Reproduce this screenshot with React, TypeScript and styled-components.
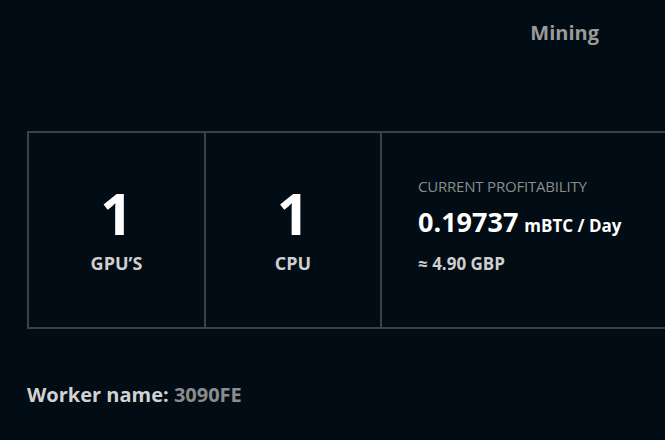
import styled, { createGlobalStyle } from "styled-components";

const GlobalStyle = createGlobalStyle`
  html, body {
    margin: 0;
    padding: 0;
    background: #020c14;
  }
  body {
    font-family: "Open Sans", "Liberation Sans", sans-serif;
    color: #ffffff;
  }
`

const Page = styled.div`
  width: 665px;
  height: 440px;
  overflow: hidden;
  background: #020c14;
  display: flex;
  flex-direction: column;
`

const Header = styled.div`
  display: flex;
  justify-content: flex-end;
  padding: 19px 66px 0 0;
  height: 131px;
  box-sizing: border-box;
`

const Tab = styled.div`
  color: #9a9a9a;
  font-weight: 700;
  font-size: 20px;
  line-height: 28px;
`

const Stats = styled.div`
  display: flex;
  margin-left: 27px;
  width: 700px;
  height: 198px;
  box-sizing: border-box;
  border: 2px solid #39414a;
  border-right: none;
`

const Cell = styled.div<{ $width?: number }>`
  width: ${p => (p.$width ? `${p.$width}px` : "auto")};
  flex: ${p => (p.$width ? "none" : "1")};
  box-sizing: border-box;
  border-right: 2px solid #39414a;
  display: flex;
  flex-direction: column;
  align-items: center;
  padding-top: 50px;

  &:last-child {
    border-right: none;
    align-items: flex-start;
    padding: 42px 0 0 36px;
  }
`

const Count = styled.div`
  font-size: 57px;
  font-weight: 700;
  line-height: 60px;
  color: #ffffff;
`

const Label = styled.div`
  margin-top: 8px;
  font-size: 18px;
  line-height: 24px;
  font-weight: 700;
  color: #cfcfcf;
`

const Caption = styled.div`
  font-size: 15px;
  line-height: 22px;
  color: #8c8c8c;
  letter-spacing: -0.2px;
`

const Amount = styled.div`
  margin-top: 9px;
  display: flex;
  align-items: baseline;
  gap: 6px;
  font-weight: 700;
  color: #ffffff;
  line-height: 32px;
`

const Value = styled.span`
  font-size: 27px;
`

const Unit = styled.span`
  font-size: 17px;
`

const Fiat = styled.div`
  margin-top: 11px;
  font-size: 17px;
  line-height: 22px;
  font-weight: 700;
  color: #cfcfcf;
`

const Worker = styled.div`
  margin: 52px 0 0 27px;
  font-size: 20px;
  font-weight: 700;
  color: #d2d2d2;
`

const WorkerId = styled.span`
  color: #8c8c8c;
`

export default function App() {
  return (
    <Page>
      <GlobalStyle />
      <Header>
        <Tab>Mining</Tab>
      </Header>
      <Stats>
        <Cell $width={177}>
          <Count>1</Count>
          <Label>GPU’S</Label>
        </Cell>
        <Cell $width={176}>
          <Count>1</Count>
          <Label>CPU</Label>
        </Cell>
        <Cell>
          <Caption>CURRENT PROFITABILITY</Caption>
          <Amount>
            <Value>0.19737</Value>
            <Unit>mBTC / Day</Unit>
          </Amount>
          <Fiat>≈ 4.90 GBP</Fiat>
        </Cell>
      </Stats>
      <Worker>
        Worker name: <WorkerId>3090FE</WorkerId>
      </Worker>
    </Page>
  );
}
